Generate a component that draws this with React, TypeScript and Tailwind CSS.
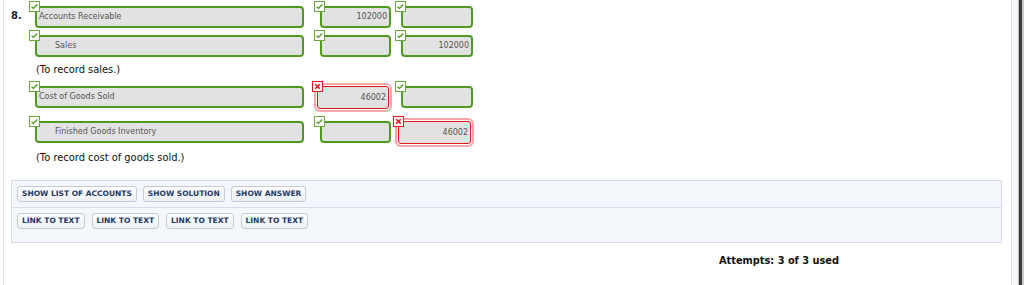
import type { ReactNode } from 'react';

// Journal entry review panel (question 8)

type Mark = 'ok' | 'bad';

interface CellProps {
  mark: Mark;
  width: string;
  children?: ReactNode;
  align?: 'left' | 'right';
  indent?: boolean;
}

function CheckIcon() {
  return (
    <svg width="11" height="11" viewBox="0 0 11 11">
      <rect x="0.5" y="0.5" width="10" height="10" fill="#ffffff" stroke="#6aa63c" />
      <path d="M2.6 5.8 L4.4 7.4 L8.2 3.6" fill="none" stroke="#4f9a1f" strokeWidth="1.4" />
    </svg>
  );
}

function CrossIcon() {
  return (
    <svg width="11" height="11" viewBox="0 0 11 11">
      <rect x="0.5" y="0.5" width="10" height="10" fill="#ffffff" stroke="#e2161d" />
      <path d="M3.2 3.2 L7.8 7.8 M7.8 3.2 L3.2 7.8" fill="none" stroke="#e2161d" strokeWidth="1.6" />
    </svg>
  );
}

function Cell({ mark, width, children, align = 'left', indent = false }: CellProps) {
  const ok = mark === 'ok';
  return (
    <div className={`relative flex h-[28px] flex-col pt-[5px] ${width}`}>
      <div className={`absolute top-0 z-10 leading-none ${ok ? 'left-[-6px]' : 'left-[-8px]'}`}>
        {ok ? <CheckIcon /> : <CrossIcon />}
      </div>
      <div
        className={
          ok
            ? 'flex h-[22px] items-center rounded-[4px] border-2 border-[#4f9a1f] bg-[#e2e2e2]'
            : 'ml-[-3px] mr-[2px] flex h-[23px] items-center rounded-[3px] border border-[#e2161d] bg-[#e2e2e2] shadow-[0_0_0_1px_#ffffff,0_0_0_3px_#f6a8a8]'
        }
      >
        <span
          className={`w-full text-[8px] text-[#555555] ${align === 'right' ? 'pr-[2px] text-right' : indent ? 'pl-[18px]' : 'pl-[2px]'}`}
        >
          {children}
        </span>
      </div>
    </div>
  );
}

// one journal line: account, debit, credit
function Line({ children, className = '' }: { children: ReactNode[]; className?: string }) {
  return (
    <div className={`flex items-start pl-[31px] ${className}`}>
      {children[0]}
      <div className="ml-[16px] flex">{children[1]}</div>
      <div className="ml-[10px] flex">{children[2]}</div>
    </div>
  );
}

function Btn({ label }: { label: string }) {
  return (
    <button className="h-[16px] rounded-[3px] border border-[#c6ccd6] bg-gradient-to-b from-[#ffffff] to-[#eceff3] px-[4px] text-[7.5px] font-bold leading-none text-[#1d3968]">
      {label}
    </button>
  );
}

export default function App() {
  return (
    <div className="flex h-[285px] w-[1024px] bg-white font-['DejaVu_Sans',Verdana,sans-serif] text-[#111]">
      <div className="ml-[3px] w-[1008px] border-l border-[#dfe4ec] pt-[1px]">
        <div className="relative">
          <span className="absolute left-[7px] top-[7px] text-[10px] font-semibold text-[#222]">8.</span>
          <Line>
            <Cell mark="ok" width="w-[269px]">Accounts Receivable</Cell>
            <Cell mark="ok" width="w-[71px]" align="right">102000</Cell>
            <Cell mark="ok" width="w-[72px]" />
          </Line>
          <Line className="mt-[1px]">
            <Cell mark="ok" width="w-[269px]" indent>Sales</Cell>
            <Cell mark="ok" width="w-[71px]" />
            <Cell mark="ok" width="w-[72px]" align="right">102000</Cell>
          </Line>
          <p className="mt-[4px] h-[16px] pl-[32px] text-[9.9px] leading-[16px]">(To record sales.)</p>
          <Line className="mt-[3px]">
            <Cell mark="ok" width="w-[269px]">Cost of Goods Sold</Cell>
            <Cell mark="bad" width="w-[71px]" align="right">46002</Cell>
            <Cell mark="ok" width="w-[72px]" />
          </Line>
          <Line className="mt-[7px]">
            <Cell mark="ok" width="w-[269px]" indent>Finished Goods Inventory</Cell>
            <Cell mark="ok" width="w-[71px]" />
            <Cell mark="bad" width="w-[72px]" align="right">46002</Cell>
          </Line>
          <p className="mt-[6px] h-[16px] pl-[32px] text-[9.9px] leading-[16px]">(To record cost of goods sold.)</p>
        </div>

        <div className="ml-[7px] mt-[14px] w-[991px] border border-[#d6dce6] bg-[#f3f6fa]">
          <div className="flex h-[27px] items-center gap-[6px] border-b border-[#d6dce6] pl-[5px]">
            <Btn label="SHOW LIST OF ACCOUNTS" />
            <Btn label="SHOW SOLUTION" />
            <Btn label="SHOW ANSWER" />
          </div>
          <div className="flex h-[34px] items-start gap-[7px] pl-[5px] pt-[5px]">
            <Btn label="LINK TO TEXT" />
            <Btn label="LINK TO TEXT" />
            <Btn label="LINK TO TEXT" />
            <Btn label="LINK TO TEXT" />
          </div>
        </div>

        <p className="mt-[10px] pl-[715px] text-[9.8px] font-bold leading-[16px] text-[#111]">
          Attempts: 3 of 3 used
        </p>
      </div>

      {/* right edge / scrollbar frame */}
      <div className="flex h-full">
        <div className="w-[1px] bg-[#dfe4ec]" />
        <div className="w-[6px] bg-[#f6f8fb]" />
        <div className="w-[1px] bg-[#bdbdbd]" />
        <div className="w-[3px] bg-[#3d3d3d]" />
        <div className="w-[2px] bg-[#c9c9c9]" />
      </div>
    </div>
  );
}
